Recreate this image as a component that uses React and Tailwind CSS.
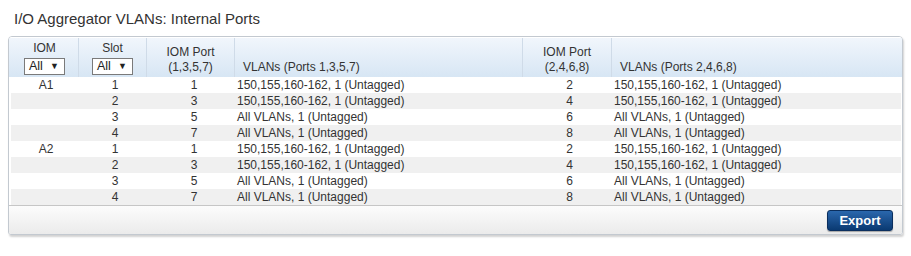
import React from "react";

const rows = [
  { iom: "A1", slot: "1", p1: "1", v1: "150,155,160-162, 1 (Untagged)", p2: "2", v2: "150,155,160-162, 1 (Untagged)" },
  { iom: "", slot: "2", p1: "3", v1: "150,155,160-162, 1 (Untagged)", p2: "4", v2: "150,155,160-162, 1 (Untagged)" },
  { iom: "", slot: "3", p1: "5", v1: "All VLANs, 1 (Untagged)", p2: "6", v2: "All VLANs, 1 (Untagged)" },
  { iom: "", slot: "4", p1: "7", v1: "All VLANs, 1 (Untagged)", p2: "8", v2: "All VLANs, 1 (Untagged)" },
  { iom: "A2", slot: "1", p1: "1", v1: "150,155,160-162, 1 (Untagged)", p2: "2", v2: "150,155,160-162, 1 (Untagged)" },
  { iom: "", slot: "2", p1: "3", v1: "150,155,160-162, 1 (Untagged)", p2: "4", v2: "150,155,160-162, 1 (Untagged)" },
  { iom: "", slot: "3", p1: "5", v1: "All VLANs, 1 (Untagged)", p2: "6", v2: "All VLANs, 1 (Untagged)" },
  { iom: "", slot: "4", p1: "7", v1: "All VLANs, 1 (Untagged)", p2: "8", v2: "All VLANs, 1 (Untagged)" },
];

const cols = "grid grid-cols-[70px_68px_88px_288px_89px_1fr]";

const Select = () => (
  <div className="w-[41px] h-[17px] border border-[#7a7a7a] bg-white flex items-center justify-between pl-[4px] pr-[5px] text-[12.5px] leading-none text-[#222]">
    <span>All</span>
    <span className="text-[9px]">▼</span>
  </div>
);

const App = () => {
  return (
    <div className="w-[911px] h-[256px] bg-white font-['Liberation_Sans',Arial,sans-serif] text-[#333]">
      {/* Titel */}
      <div className="pt-[9px] pl-[14px] text-[15px] leading-[20px] text-[#333]">
        I/O Aggregator VLANs: Internal Ports
      </div>

      <div className="mt-[7px] ml-[8px] w-[895px] border border-[#c3c9d0] rounded-t-[4px] rounded-b-[3px] shadow-[1px_2px_2px_rgba(0,0,0,0.18)] overflow-hidden">
        {/* Header */}
        <div className={`${cols} h-[40px] bg-gradient-to-b from-[#f1f6fc] to-[#d7e6f4] text-[12px] leading-[14px] border-t border-white`}>
          <div className="flex flex-col items-center justify-end pb-[2px] border-r border-[#cfdbe8]">
            <span className="mb-[3px] pl-[2px]">IOM</span>
            <div className="pl-[2px]">
              <Select />
            </div>
          </div>
          <div className="flex flex-col items-center justify-end pb-[2px] border-r border-[#cfdbe8]">
            <span className="mb-[3px]">Slot</span>
            <Select />
          </div>
          <div className="flex flex-col items-center justify-end pb-[3px] border-r border-[#cfdbe8] text-center">
            <span>IOM Port</span>
            <span className="mt-[1px]">(1,3,5,7)</span>
          </div>
          <div className="flex items-end pb-[3px] pl-[8px] border-r border-[#cfdbe8]">
            VLANs (Ports 1,3,5,7)
          </div>
          <div className="flex flex-col items-center justify-end pb-[3px] border-r border-[#cfdbe8] text-center">
            <span>IOM Port</span>
            <span className="mt-[1px]">(2,4,6,8)</span>
          </div>
          <div className="flex items-end pb-[3px] pl-[8px]">
            VLANs (Ports 2,4,6,8)
          </div>
        </div>

        {/* Rows */}
        <div className="pl-[2px] pr-[1px] bg-white">
          {rows.map((r, i) => (
            <div
              key={i}
              className={`${cols} h-[16px] text-[12px] leading-[16px] text-[#333] ${i % 2 === 1 ? "bg-[#f0f0f0]" : "bg-white"}`}
            >
              <div className="text-center">{r.iom}</div>
              <div className="text-center">{r.slot}</div>
              <div className="text-center pl-[2px]">{r.p1}</div>
              <div className="whitespace-nowrap">{r.v1}</div>
              <div className="text-center">{r.p2}</div>
              <div className="whitespace-nowrap">{r.v2}</div>
            </div>
          ))}
        </div>

        {/* Footer */}
        <div className="h-[29px] border-t border-[#c6c6c6] bg-gradient-to-b from-[#fcfcfc] to-[#ebebeb] flex items-center justify-end pr-[9px]">
          <button className="w-[66px] h-[21px] rounded-[3px] border border-[#0b2f5e] bg-gradient-to-b from-[#2a67ad] to-[#0a3a72] text-white text-[13px] font-bold leading-none shadow-[0_1px_1px_rgba(0,0,0,0.3)]">
            Export
          </button>
        </div>
      </div>
    </div>
  );
};

export default App;
